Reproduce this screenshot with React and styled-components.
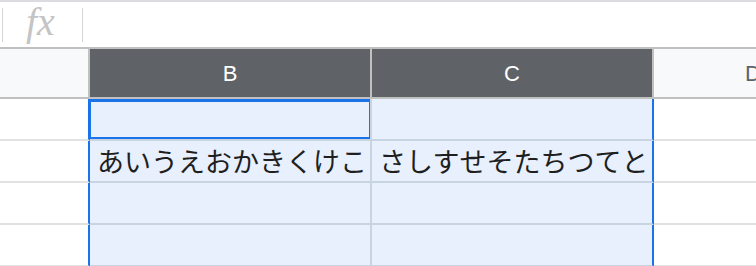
import styled, { createGlobalStyle } from "styled-components";

const GlobalStyle = createGlobalStyle`
  body {
    margin: 0;
    padding: 0;
    background-color: #ffffff;
    font-family: "Liberation Sans", Arial, sans-serif;
    overflow: hidden;
  }
`;

const Sheet = styled.div`
  width: 756px;
  height: 266px;
  overflow: hidden;
  border-top: 2px solid #dadce0;
  box-sizing: border-box;
`;

const FormulaBar = styled.div`
  height: 45px;
  display: flex;
  align-items: center;
  padding-left: 2px;
`;

const Divider = styled.div`
  width: 1px;
  height: 34px;
  background-color: #d4d4d4;
`;

const FxLabel = styled.div`
  width: 79px;
  padding-left: 23px;
  box-sizing: border-box;
  font-family: "Liberation Serif", "Times New Roman", serif;
  font-style: italic;
  font-size: 40px;
  color: #c4c4c4;
  line-height: 1;
  padding-bottom: 6px;
`;

const Grid = styled.div`
  display: grid;
  grid-template-columns: 90px 282px 282px 200px;
  width: 854px;
`;

const HeaderCell = styled.div`
  height: 47px;
  border-top: 2px solid #c0c0c0;
  border-bottom: 2px solid #c0c0c0;
  border-right: 2px solid #c0c0c0;
  background-color: ${(p) => (p.$selected ? "#5f6368" : "#f8f9fa")};
  color: ${(p) => (p.$selected ? "#ffffff" : "#5f6368")};
  display: flex;
  align-items: center;
  justify-content: center;
  font-size: 22px;
  padding-top: 1px;
`;

const Cell = styled.div`
  position: relative;
  box-sizing: border-box;
  height: 42px;
  border-bottom: 2px solid ${(p) => (p.$selected ? "#c9d4e3" : "#e2e2e3")};
  border-right: 2px solid ${(p) => (p.$edge ? "#1a73e8" : p.$selected ? "#c9d4e3" : "#e2e2e3")};
  background-color: ${(p) => (p.$selected ? "#e8f0fe" : "#ffffff")};
  display: flex;
  align-items: flex-end;
  padding: 0 0 3px 7px;
  font-family: "Noto Sans CJK JP", "Noto Sans", sans-serif;
  font-size: 27px;
  line-height: 34px;
  color: #1f1f1f;
  white-space: nowrap;
  overflow: hidden;
`;

const ActiveBox = styled.div`
  position: absolute;
  left: -2px;
  top: 0;
  right: -2px;
  bottom: -1px;
  border: 3px solid #1a73e8;
  pointer-events: none;
`;

const rows = [
  ["", ""],
  ["あいうえおかきくけこ", "さしすせそたちつてと"],
  ["", ""],
  ["", ""],
];

function App() {
  return (
    <>
      <GlobalStyle />
      <Sheet>
        <FormulaBar>
          <Divider />
          <FxLabel>fx</FxLabel>
          <Divider />
        </FormulaBar>
        <Grid>
          <HeaderCell />
          <HeaderCell $selected>B</HeaderCell>
          <HeaderCell $selected>C</HeaderCell>
          <HeaderCell>D</HeaderCell>
          {rows.map((row, i) => (
            <Row key={i} row={row} active={i === 0} />
          ))}
        </Grid>
      </Sheet>
    </>
  );
}

function Row({ row, active }) {
  return (
    <>
      <Cell $edge />
      <Cell $selected>
        {row[0]}
        {active && <ActiveBox />}
      </Cell>
      <Cell $selected $edge>
        {row[1]}
      </Cell>
      <Cell />
    </>
  );
}

export default App;
